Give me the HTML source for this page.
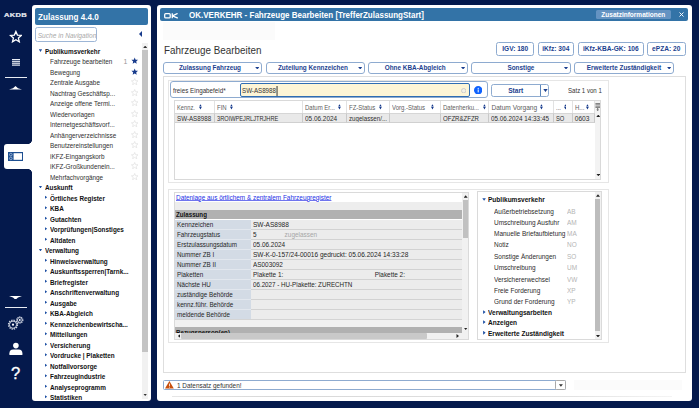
<!DOCTYPE html>
<html lang="de">
<head>
<meta charset="utf-8">
<title>OK.VERKEHR - Fahrzeuge Bearbeiten</title>
<style>
*{box-sizing:border-box;margin:0;padding:0}
html,body{width:699px;height:408px;overflow:hidden}
body{background:#04194c;font-family:"Liberation Sans",sans-serif;font-size:7px;color:#333;position:relative}
.abs{position:absolute}
svg{display:block}
/* ---------- left icon bar ---------- */
#side{position:absolute;left:0;top:0;width:32px;height:408px}
#side .sep{position:absolute;left:4.5px;width:22px;height:1px;background:#e8ecf4}
#tab{position:absolute;left:4px;top:144px;width:30px;height:25px;background:#fff;border-radius:3px 0 0 3px}
.cc{position:absolute;left:28px;width:4px;height:4px}
/* ---------- nav panel ---------- */
#nav{position:absolute;left:31.6px;top:5px;width:119.4px;height:395.5px;background:#fff;border-radius:3px;overflow:hidden}
#navhead{position:absolute;left:3.2px;top:3.4px;width:113.2px;height:16.3px;background:#3373a7;border-radius:2px;color:#fff;font-weight:bold;font-size:9px;line-height:18.2px;padding-left:3.7px;white-space:nowrap}
#navhead span{display:inline-block;transform:scaleX(.9);transform-origin:0 50%}
#navsearch{position:absolute;left:3.1px;top:21.6px;width:62.2px;height:15px;border:1px solid #9db6d6;border-radius:2.5px;font-style:italic;color:#a9a9a9;font-size:6.6px;line-height:15.8px;padding-left:2px;white-space:nowrap;overflow:hidden}
#tree{position:absolute;left:0.4px;top:41.7px;width:110px}
#tree div{height:10.5px;line-height:10.5px;white-space:nowrap;position:relative;font-size:7px;color:#303030}
#tree .g{font-weight:bold;color:#111;padding-left:12.6px}
#tree .s{font-weight:bold;color:#111;padding-left:18px}
#tree .l{padding-left:17.8px}
#tree .t{display:inline-block;transform:scaleX(.91);transform-origin:0 50%}
#tree i{position:absolute;top:3.2px}
#tree .g i{left:6.8px;width:3.4px;height:2.7px;background:#1d4fa3;clip-path:polygon(0 0,100% 0,50% 100%);top:2.6px}
#tree .s i{left:12.7px;width:2.5px;height:3.6px;background:#1d4fa3;clip-path:polygon(0 0,100% 50%,0 100%);top:1.8px}
#tree svg{position:absolute;left:98.8px;top:0}
#tree b.n{position:absolute;left:91.5px;top:0;font-weight:normal;color:#999}
/* scrollbars */
.sbtrack{position:absolute;background:#f1f1f1}
.sbthumb{position:absolute;background:#c4c4c4}
.arr{position:absolute}
/* ---------- main panel ---------- */
#main{position:absolute;left:157px;top:5px;width:534.5px;height:396px;background:#fff;border-radius:3px;overflow:hidden}
#mainhead{position:absolute;left:3.3px;top:3.2px;width:527.5px;height:13px;background:#3373a7;border-radius:2px;color:#fff;font-weight:bold;white-space:nowrap}
#mainhead .t{position:absolute;left:28.7px;top:.9px;font-size:8.5px;line-height:13px;transform:scaleX(.942);transform-origin:0 50%}
#zusatz{position:absolute;left:435.5px;top:2.2px;width:75px;height:8.8px;background:#6493c2;border-radius:1.5px;font-size:6.5px;line-height:9px;text-align:center}
h1{position:absolute;left:7px;top:38.5px;transform:scaleX(.947);transform-origin:0 50%;font-size:10.4px;font-weight:normal;color:#333;line-height:14px;white-space:nowrap}
.badge{position:absolute;top:37.3px;height:14.2px;margin-left:-.4px;border:1px solid #8eabd0;border-radius:2.5px;color:#1b3f8f;font-weight:bold;font-size:6.6px;line-height:12px;text-align:center;white-space:nowrap;background:#fff}
.dd{position:absolute;top:57.2px;height:11.4px;border:1px solid #8eabd0;border-radius:3px;color:#1b3f8f;font-weight:bold;font-size:6.4px;line-height:10.6px;text-align:center;white-space:nowrap;background:#fff;padding-right:0}
.dd:after{content:"";position:absolute;right:1.5px;top:3.7px;width:4.2px;height:2.6px;background:#1b3f8f;clip-path:polygon(0 0,100% 0,50% 100%)}
.box{position:absolute;border:1px solid #dcdcdc;background:#fff}

.tx{display:inline-block;transform:scaleX(.91);white-space:nowrap}
.tl{transform-origin:0 50%}
#sgroup{position:absolute;left:12.5px;top:75.9px;width:318.3px;height:17.6px;border:1px solid #8eabd0;border-radius:3px;background:#fff}
#sinput{position:absolute;left:82.8px;top:77.8px;width:230px;height:14.3px;border:1px solid #2f6db3;border-radius:2px;background:#fdf5d6}
#start{position:absolute;left:333.7px;top:78.5px;width:58.4px;height:13.3px;border:1px solid #8eabd0;border-radius:2.5px;background:#fff}
#start .l{position:absolute;left:0;top:0;width:49px;height:11.3px;border-right:1px solid #5c86bb;color:#1b3f8f;font-weight:bold;font-size:6.6px;line-height:11.6px;text-align:center}
table{border-collapse:separate;border-spacing:0;table-layout:fixed}
#grid{position:absolute;left:16.8px;top:95.2px;width:427.7px;height:80.2px;border:1px solid #d9d9d9;background:#fff;overflow:hidden}
#grid .h{position:absolute;top:0;height:12px;padding-top:.5px;border-right:1px solid #e2e2e2;color:#5e5e5e;font-size:6.6px;line-height:12px;padding-left:1.9px;white-space:nowrap;background:#fff}
#grid .c{position:absolute;top:11.6px;height:10.6px;border-right:1px solid #c9c9c9;border-top:1px solid #d6d6d6;border-bottom:1px solid #d0d0d0;color:#2e2e2e;font-size:6.6px;line-height:10.4px;padding-left:1.8px;white-space:nowrap;background:#e9e9e9;overflow:hidden}
.srt{position:absolute;top:3.3px;width:2.9px;height:5.6px}
#det{position:absolute;left:16.7px;top:187.4px;width:295.8px;height:147.3px;border:1px solid #dadada;background:#fff;overflow:hidden}
#det .r{position:absolute;left:-.8px;width:287.8px;height:10px;background:linear-gradient(90deg,#e2e7ee 76.1px,#d2d2d2 76.1px);font-size:6.9px;line-height:9.4px;color:#262626;white-space:nowrap}
#det .r .k{position:absolute;left:0;top:0;width:76.1px;height:9.2px;background:#d3dbe5;padding-left:2.1px}
#det .r .v{position:absolute;left:76.1px;top:0;width:211.7px;height:9.2px;background:#ececec;padding-left:2.2px}
#det .v .tx{transform:scaleX(.93)}
#det .hd{position:absolute;left:-.8px;width:287.8px;background:#b1b1b1;font-weight:bold;color:#111;font-size:6.8px;padding-left:1.6px;white-space:nowrap;overflow:hidden}
#acts{position:absolute;left:320.3px;top:186.4px;width:124.6px;height:149px;border:1px solid #dadada;background:#fff;overflow:hidden}
#acts div.a{position:absolute;left:15.4px;margin-top:.5px;height:10px;line-height:10px;font-size:7.1px;color:#2c2c2c;white-space:nowrap}
#acts div.a b{position:absolute;left:73px;top:0;font-weight:normal;color:#b4b4b4}
#acts div.gg{position:absolute;left:10.2px;margin-top:.4px;height:10px;line-height:10px;font-size:7.2px;font-weight:bold;color:#111;white-space:nowrap}
#acts i{position:absolute}
#status{position:absolute;left:6px;top:375.2px;width:403px;height:9.8px;border:1px solid #8eabd0;border-radius:1.5px;background:#fff;font-size:7.05px;line-height:9.6px;color:#333;white-space:nowrap}
</style>
</head>
<body>
<!-- =================== LEFT ICON BAR =================== -->
<div id="side">
  <div class="abs" style="left:4.4px;top:11.5px;font-size:5.5px;line-height:7px;font-weight:bold;color:#e9ecf3;-webkit-text-stroke:.2px #e9ecf3;letter-spacing:.2px;transform:scaleX(1.37);transform-origin:0 50%;white-space:nowrap">AKDB</div>
  <svg class="abs" style="left:8.6px;top:30.2px" width="13.8" height="13" viewBox="0 0 24 23"><path d="M12 2.6 L14.7 9 L21.6 9.6 L16.4 14.1 L18 20.9 L12 17.3 L6 20.9 L7.6 14.1 L2.4 9.6 L9.3 9 Z" fill="none" stroke="#fff" stroke-width="2.3" stroke-linejoin="miter"/></svg>
  <svg class="abs" style="left:11.6px;top:58.6px" width="8.6" height="7.6" viewBox="0 0 86 76"><g fill="#e9edf5"><rect x="0" y="0" width="86" height="13"/><rect x="0" y="21" width="86" height="13"/><rect x="0" y="42" width="86" height="13"/><rect x="0" y="63" width="86" height="13"/></g></svg>
  <div class="sep" style="top:77px"></div>
  <svg class="abs" style="left:9px;top:86px" width="13" height="3.6" viewBox="0 0 130 36"><path d="M0 36 L40 22 L65 0 L90 22 L130 36 Z" fill="#fff"/></svg>
  <div class="cc" style="top:140px;background:radial-gradient(circle at 0 0,#04194c 3.6px,#fff 4.2px)"></div>
  <div id="tab"></div>
  <div class="cc" style="top:169px;background:radial-gradient(circle at 0 100%,#04194c 3.6px,#fff 4.2px)"></div>
  <svg class="abs" style="left:8.2px;top:151.7px" width="15.2" height="9" viewBox="0 0 152 90"><rect x="6" y="6" width="140" height="78" fill="#fff" stroke="#1d4f91" stroke-width="12"/><rect x="0" y="0" width="56" height="90" fill="#1d4f91"/><circle cx="28" cy="26" r="13" fill="none" stroke="#b9c9e2" stroke-width="7"/><circle cx="28" cy="64" r="13" fill="none" stroke="#b9c9e2" stroke-width="7"/></svg>
  <svg class="abs" style="left:8.8px;top:295.6px" width="13" height="3.8" viewBox="0 0 130 38"><path d="M0 0 L130 0 L90 14 L65 38 L40 14 Z" fill="#fff"/></svg>
  <div class="sep" style="top:307px"></div>
  <svg class="abs" style="left:6px;top:314px" width="20" height="18" viewBox="0 0 20 18"><g fill="none" stroke="#cfd5e2"><circle cx="7" cy="10.7" r="4.5" stroke-width="1.3" stroke-dasharray="1.35 1"/><circle cx="7" cy="10.7" r="3.6" stroke-width="1"/><circle cx="13.8" cy="6" r="3.1" stroke-width="1.1" stroke-dasharray="1.2 .75"/><circle cx="13.8" cy="6" r="2.4" stroke-width=".9"/></g><circle cx="7" cy="10.7" r="1.1" fill="#fff"/><circle cx="13.8" cy="6" r=".9" fill="#fff"/></svg>
  <svg class="abs" style="left:9px;top:342px" width="14" height="14" viewBox="0 0 14 14"><circle cx="6.9" cy="3.6" r="2.8" fill="#fff"/><path d="M0.4 13 V11.2 Q0.4 7.4 4.2 7.4 H9.6 Q13.4 7.4 13.4 11.2 V13 Z" fill="#fff"/></svg>
  <div class="abs" style="left:10.2px;top:364.2px;width:11px;height:20px;color:#fff;font-size:16.6px;line-height:20px;text-align:center;-webkit-text-stroke:.35px #fff">?</div>
</div>

<!-- =================== NAV PANEL =================== -->
<div id="nav">
  <div id="navhead"><span>Zulassung 4.4.0</span></div>
  <div id="navsearch">Suche in Navigation</div>
  <div class="arr" style="left:107.4px;top:25.5px;width:3.5px;height:7.0px;background:#173b8c;clip-path:polygon(100% 0,100% 100%,0 50%)"></div>
  <div id="tree">
    <div class="g"><i></i><span class="t">Publikumsverkehr</span></div>
    <div class="l"><span class="t">Fahrzeuge bearbeiten</span><b class="n">1</b><svg width="7.4" height="7" viewBox="0 0 24 23"><path d="M12 1.5 L15 8.7 L22.8 9.4 L16.9 14.5 L18.7 22 L12 18 L5.3 22 L7.1 14.5 L1.2 9.4 L9 8.7 Z" fill="#173b8c"/></svg></div>
    <div class="l"><span class="t">Bewegung</span><svg width="7.4" height="7" viewBox="0 0 24 23"><path d="M12 1.5 L15 8.7 L22.8 9.4 L16.9 14.5 L18.7 22 L12 18 L5.3 22 L7.1 14.5 L1.2 9.4 L9 8.7 Z" fill="#173b8c"/></svg></div>
    <div class="l"><span class="t">Zentrale Ausgabe</span><svg width="7.4" height="7" viewBox="0 0 24 23"><path d="M12 1.5 L15 8.7 L22.8 9.4 L16.9 14.5 L18.7 22 L12 18 L5.3 22 L7.1 14.5 L1.2 9.4 L9 8.7 Z" fill="none" stroke="#d4d4d4" stroke-width="1.6"/></svg></div>
    <div class="l"><span class="t">Nachtrag Geschäftsp...</span><svg width="7.4" height="7" viewBox="0 0 24 23"><path d="M12 1.5 L15 8.7 L22.8 9.4 L16.9 14.5 L18.7 22 L12 18 L5.3 22 L7.1 14.5 L1.2 9.4 L9 8.7 Z" fill="none" stroke="#d4d4d4" stroke-width="1.6"/></svg></div>
    <div class="l"><span class="t">Anzeige offene Termi...</span><svg width="7.4" height="7" viewBox="0 0 24 23"><path d="M12 1.5 L15 8.7 L22.8 9.4 L16.9 14.5 L18.7 22 L12 18 L5.3 22 L7.1 14.5 L1.2 9.4 L9 8.7 Z" fill="none" stroke="#d4d4d4" stroke-width="1.6"/></svg></div>
    <div class="l"><span class="t">Wiedervorlagen</span><svg width="7.4" height="7" viewBox="0 0 24 23"><path d="M12 1.5 L15 8.7 L22.8 9.4 L16.9 14.5 L18.7 22 L12 18 L5.3 22 L7.1 14.5 L1.2 9.4 L9 8.7 Z" fill="none" stroke="#d4d4d4" stroke-width="1.6"/></svg></div>
    <div class="l"><span class="t">Internetgeschäftsvorf...</span><svg width="7.4" height="7" viewBox="0 0 24 23"><path d="M12 1.5 L15 8.7 L22.8 9.4 L16.9 14.5 L18.7 22 L12 18 L5.3 22 L7.1 14.5 L1.2 9.4 L9 8.7 Z" fill="none" stroke="#d4d4d4" stroke-width="1.6"/></svg></div>
    <div class="l"><span class="t">Anhängerverzeichnisse</span><svg width="7.4" height="7" viewBox="0 0 24 23"><path d="M12 1.5 L15 8.7 L22.8 9.4 L16.9 14.5 L18.7 22 L12 18 L5.3 22 L7.1 14.5 L1.2 9.4 L9 8.7 Z" fill="none" stroke="#d4d4d4" stroke-width="1.6"/></svg></div>
    <div class="l"><span class="t">Benutzereinstellungen</span><svg width="7.4" height="7" viewBox="0 0 24 23"><path d="M12 1.5 L15 8.7 L22.8 9.4 L16.9 14.5 L18.7 22 L12 18 L5.3 22 L7.1 14.5 L1.2 9.4 L9 8.7 Z" fill="none" stroke="#d4d4d4" stroke-width="1.6"/></svg></div>
    <div class="l"><span class="t">iKFZ-Eingangskorb</span><svg width="7.4" height="7" viewBox="0 0 24 23"><path d="M12 1.5 L15 8.7 L22.8 9.4 L16.9 14.5 L18.7 22 L12 18 L5.3 22 L7.1 14.5 L1.2 9.4 L9 8.7 Z" fill="none" stroke="#d4d4d4" stroke-width="1.6"/></svg></div>
    <div class="l"><span class="t">iKFZ-Großkundenein...</span><svg width="7.4" height="7" viewBox="0 0 24 23"><path d="M12 1.5 L15 8.7 L22.8 9.4 L16.9 14.5 L18.7 22 L12 18 L5.3 22 L7.1 14.5 L1.2 9.4 L9 8.7 Z" fill="none" stroke="#d4d4d4" stroke-width="1.6"/></svg></div>
    <div class="l"><span class="t">Mehrfachvorgänge</span><svg width="7.4" height="7" viewBox="0 0 24 23"><path d="M12 1.5 L15 8.7 L22.8 9.4 L16.9 14.5 L18.7 22 L12 18 L5.3 22 L7.1 14.5 L1.2 9.4 L9 8.7 Z" fill="none" stroke="#d4d4d4" stroke-width="1.6"/></svg></div>
    <div class="g"><i></i><span class="t">Auskunft</span></div>
    <div class="s"><i></i><span class="t">Örtliches Register</span></div>
    <div class="s"><i></i><span class="t">KBA</span></div>
    <div class="s"><i></i><span class="t">Gutachten</span></div>
    <div class="s"><i></i><span class="t">Vorprüfungen|Sonstiges</span></div>
    <div class="s"><i></i><span class="t">Altdaten</span></div>
    <div class="g"><i></i><span class="t">Verwaltung</span></div>
    <div class="s"><i></i><span class="t">Hinweisverwaltung</span></div>
    <div class="s"><i></i><span class="t">Auskunftssperren|Tarnk...</span></div>
    <div class="s"><i></i><span class="t">Briefregister</span></div>
    <div class="s"><i></i><span class="t">Anschriftenverwaltung</span></div>
    <div class="s"><i></i><span class="t">Ausgabe</span></div>
    <div class="s"><i></i><span class="t">KBA-Abgleich</span></div>
    <div class="s"><i></i><span class="t">Kennzeichenbewirtscha...</span></div>
    <div class="s"><i></i><span class="t">Mitteilungen</span></div>
    <div class="s"><i></i><span class="t">Versicherung</span></div>
    <div class="s"><i></i><span class="t">Vordrucke | Plaketten</span></div>
    <div class="s"><i></i><span class="t">Notfallvorsorge</span></div>
    <div class="s"><i></i><span class="t">Fahrzeugindustrie</span></div>
    <div class="s"><i></i><span class="t">Analyseprogramm</span></div>
    <div class="s"><i></i><span class="t">Statistiken</span></div>
  </div>
  <div class="sbtrack" style="left:110.4px;top:38px;width:6.2px;height:356px"></div>
  <div class="sbthumb" style="left:110.4px;top:45px;width:6px;height:302px"></div>
  <div class="arr" style="left:111.6px;top:40.5px;width:4.0px;height:2.5px;background:#333;clip-path:polygon(50% 0,100% 100%,0 100%)"></div>
  <div class="arr" style="left:111.6px;top:388.5px;width:4.0px;height:2.5px;background:#333;clip-path:polygon(0 0,100% 0,50% 100%)"></div>
</div>

<!-- =================== MAIN PANEL =================== -->
<div id="main">
  <div id="mainhead">
    <svg class="abs" style="left:4px;top:5px" width="14.4" height="5.6" viewBox="0 0 146 56"><g fill="none" stroke="#fff" stroke-width="13"><rect x="7" y="7" width="56" height="42" rx="10"/><path d="M84 2 V54 M86 28 L138 4 M86 28 L140 52"/></g></svg>
    <div class="t">OK.VERKEHR - Fahrzeuge Bearbeiten [TrefferZulassungStart]</div>
    <div id="zusatz"><span>Zusatzinformationen</span></div>
    <svg class="abs" style="left:518.8px;top:3.9px" width="5" height="5" viewBox="0 0 10 10"><path d="M1 1 L9 9 M9 1 L1 9" stroke="#fff" stroke-width="1.9"/></svg>
  </div>
  <div class="abs" style="left:6px;top:17px;width:112px;height:18px;background:#fbfbfb"></div>
  <h1>Fahrzeuge Bearbeiten</h1>

  <div class="badge" style="left:339.7px;width:37.8px"><span>IGV: 180</span></div>
  <div class="badge" style="left:381px;width:36.4px"><span>iKfz: 304</span></div>
  <div class="badge" style="left:421.5px;width:65.4px"><span>iKfz-KBA-GK: 106</span></div>
  <div class="badge" style="left:490.2px;width:38.8px"><span>ePZA: 20</span></div>
  <div class="dd" style="padding-right:4.6px;left:5.6px;width:99.3px"><span>Zulassung Fahrzeug</span></div>
  <div class="dd" style="padding-right:4.4px;left:108.5px;width:99.3px"><span>Zuteilung Kennzeichen</span></div>
  <div class="dd" style="padding-right:5.6px;left:211.4px;width:99.3px"><span>Ohne KBA-Abgleich</span></div>
  <div class="dd" style="left:314.3px;width:99.3px"><span>Sonstige</span></div>
  <div class="dd" style="left:417.2px;width:99.6px"><span>Erweiterte Zuständigkeit</span></div>
  <div class="box" style="left:6px;top:70.5px;width:522.5px;height:297px;border-color:#dedede"></div>
  <div class="box" style="left:10.7px;top:75.3px;width:441.2px;height:103.2px;border-color:#e6e6e6"></div>
  <div id="sgroup"></div>
  <div class="abs" style="left:16px;top:80.8px;font-size:6.9px;line-height:10px;color:#333"><span class="tx tl">freies Eingabefeld*</span></div>
  <div id="sinput"><div class="abs" style="left:1.6px;top:1.9px;font-size:6.8px;line-height:10px;color:#333"><span class="tx tl" style="border-right:0.7px solid #222;padding-right:0.3px">SW-AS8988</span></div>
    <svg class="abs" style="left:220px;top:4.1px" width="5.4" height="5.4" viewBox="0 0 54 54"><circle cx="27" cy="27" r="22" fill="#f4f1e6" stroke="#c9c9c9" stroke-width="9"/></svg>
  </div>
  <svg class="abs" style="left:316.6px;top:80.6px" width="8.4" height="8.4" viewBox="0 0 84 84"><circle cx="42" cy="42" r="42" fill="#0f62fe"/><rect x="37" y="34" width="10" height="30" fill="#fff"/><circle cx="42" cy="23" r="6.5" fill="#fff"/></svg>
  <div id="start"><div class="l"><span>Start</span></div><div class="arr" style="left:51.6px;top:4.5px;width:4.4px;height:3.0px;background:#1b3f8f;clip-path:polygon(0 0,100% 0,50% 100%)"></div></div>
  <div class="abs" style="left:410.6px;top:81px;font-size:6.7px;line-height:10px;color:#333"><span class="tx tl">Satz 1 von 1</span></div>
  <div id="grid">
    <div class="h" style="left:0.5px;width:40.2px"><span class="tx tl" style="transform:scaleX(.87)">Kennz.</span><svg class="srt" style="left:23.7px" viewBox="0 0 32 64"><path d="M16 2 L31 29 H1 Z M16 62 L1 35 H31 Z" fill="#173b8c"/></svg></div>
    <div class="c" style="left:0.5px;width:40.2px"><span class="tx tl" style="transform:scaleX(.943)">SW-AS8988</span></div>
    <div class="h" style="left:40.7px;width:87.3px"><span class="tx tl">FIN</span><svg class="srt" style="left:15.0px" viewBox="0 0 32 64"><path d="M16 2 L31 29 H1 Z M16 62 L1 35 H31 Z" fill="#173b8c"/></svg></div>
    <div class="c" style="left:40.7px;width:87.3px"><span class="tx tl" style="transform:scaleX(.858)">3ROIWPEJRLJTRJHRE</span></div>
    <div class="h" style="left:128.0px;width:44.3px"><span class="tx tl">Datum Er...</span><svg class="srt" style="left:35.5px" viewBox="0 0 32 64"><path d="M16 2 L31 29 H1 Z M16 62 L1 35 H31 Z" fill="#173b8c"/></svg></div>
    <div class="c" style="left:128.0px;width:44.3px"><span class="tx tl" style="transform:scaleX(.974)">05.06.2024</span></div>
    <div class="h" style="left:172.3px;width:43.1px"><span class="tx tl">FZ-Status</span><svg class="srt" style="left:32.1px" viewBox="0 0 32 64"><path d="M16 2 L31 29 H1 Z M16 62 L1 35 H31 Z" fill="#173b8c"/></svg></div>
    <div class="c" style="left:172.3px;width:43.1px"><span class="tx tl" style="transform:scaleX(.935)">zugelassen/...</span></div>
    <div class="h" style="left:215.4px;width:50.6px"><span class="tx tl">Vorg.-Status</span><svg class="srt" style="left:41.0px" viewBox="0 0 32 64"><path d="M16 2 L31 29 H1 Z M16 62 L1 35 H31 Z" fill="#173b8c"/></svg></div>
    <div class="c" style="left:215.4px;width:50.6px"><span class="tx tl"></span></div>
    <div class="h" style="left:266.0px;width:48.7px"><span class="tx tl">Datenherku...</span><svg class="srt" style="left:42.2px" viewBox="0 0 32 64"><path d="M16 2 L31 29 H1 Z M16 62 L1 35 H31 Z" fill="#173b8c"/></svg></div>
    <div class="c" style="left:266.0px;width:48.7px"><span class="tx tl" style="transform:scaleX(.918)">OFZR&amp;ZFZR</span></div>
    <div class="h" style="left:314.7px;width:64.8px"><span class="tx tl" style="transform:scaleX(1)">Datum Vorgang</span><svg class="srt" style="left:51.0px" viewBox="0 0 32 64"><path d="M16 2 L31 29 H1 Z M16 62 L1 35 H31 Z" fill="#173b8c"/></svg></div>
    <div class="c" style="left:314.7px;width:64.8px"><span class="tx tl" style="transform:scaleX(.957)">05.06.2024 14:33:45</span></div>
    <div class="h" style="left:379.5px;width:18.7px"><span class="tx tl">...</span><svg class="srt" style="left:9.3px" viewBox="0 0 32 64"><path d="M16 2 L31 29 H1 Z M16 62 L1 35 H31 Z" fill="#173b8c"/></svg></div>
    <div class="c" style="left:379.5px;width:18.7px"><span class="tx tl" style="transform:scaleX(.879)">SO</span></div>
    <div class="h" style="left:398.2px;width:22.5px"><span class="tx tl">H...</span><svg class="srt" style="left:13.4px" viewBox="0 0 32 64"><path d="M16 2 L31 29 H1 Z M16 62 L1 35 H31 Z" fill="#173b8c"/></svg></div>
    <div class="c" style="left:398.2px;width:22.5px"><span class="tx tl" style="transform:scaleX(1)">0603</span></div>
    <div class="sbtrack" style="left:420.2px;top:0;width:6.5px;height:79px;background:#f3f3f3"></div>
    <svg class="abs" style="left:420.7px;top:1.6px" width="5.6" height="8.4" viewBox="0 0 56 84"><g fill="#6a6a6a"><rect x="4" y="0" width="48" height="8"/><rect x="4" y="14" width="48" height="8"/><rect x="4" y="28" width="48" height="8"/><rect x="4" y="42" width="48" height="8"/><rect x="22" y="50" width="10" height="18"/><path d="M14 66 H40 L27 82 Z"/></g></svg>
    <div class="arr" style="left:421.5px;top:13.4px;width:4.0px;height:2.5px;background:#222;clip-path:polygon(50% 0,100% 100%,0 100%)"></div>
    <div class="arr" style="left:421.5px;top:72.6px;width:4.0px;height:2.5px;background:#222;clip-path:polygon(0 0,100% 0,50% 100%)"></div>
  </div>
  <div class="box" style="left:10.7px;top:183.7px;width:441.2px;height:154px;border-color:#e6e6e6"></div>
  <div id="det">
    <div class="abs" style="left:.8px;top:0;width:294px;height:146px">
    <div class="abs" style="left:0.4px;top:-0.7px;font-size:7.05px;line-height:10px;color:#2330e6;white-space:nowrap"><span class="tx tl" style="text-decoration:underline;text-decoration-thickness:.7px;text-underline-offset:-.3px;text-decoration-color:#6f74ee">Datenlage aus örtlichem &amp; zentralem Fahrzeugregister</span></div>
    <div class="abs" style="left:-.8px;top:8.6px;width:287.8px;height:8px;background:#ededed"></div>
    <div class="hd" style="top:16.6px;height:9.4px;line-height:9.6px"><span class="tx tl">Zulassung</span></div>
    <div class="r" style="top:26.4px"><div class="k"><span class="tx tl">Kennzeichen</span></div><div class="v"><span class="tx tl" style="transform:scaleX(.95)">SW-AS8988</span></div></div>
    <div class="r" style="top:36.4px"><div class="k"><span class="tx tl">Fahrzeugstatus</span></div><div class="v"><span class="tx tl">5<span style="position:absolute;left:34px;color:#a6a6a6">zugelassen</span></span></div></div>
    <div class="r" style="top:46.4px"><div class="k"><span class="tx tl">Erstzulassungsdatum</span></div><div class="v"><span class="tx tl">05.06.2024</span></div></div>
    <div class="r" style="top:56.4px"><div class="k"><span class="tx tl">Nummer ZB I</span></div><div class="v"><span class="tx tl" style="transform:scaleX(.946)">SW-K-0-157/24-00016 gedruckt: 05.06.2024 14:33:28</span></div></div>
    <div class="r" style="top:66.4px"><div class="k"><span class="tx tl">Nummer ZB II</span></div><div class="v"><span class="tx tl">AS003092</span></div></div>
    <div class="r" style="top:76.4px"><div class="k"><span class="tx tl">Plaketten</span></div><div class="v"><span class="tx tl">Plakette 1:<span style="position:absolute;left:130.8px">Plakette 2:</span></span></div></div>
    <div class="r" style="top:86.4px"><div class="k"><span class="tx tl">Nächste HU</span></div><div class="v"><span class="tx tl" style="transform:scaleX(.904)">06.2027 - HU-Plakette: ZURECHTN</span></div></div>
    <div class="r" style="top:96.4px"><div class="k"><span class="tx tl">zuständige Behörde</span></div><div class="v"><span class="tx tl"></span></div></div>
    <div class="r" style="top:106.4px"><div class="k"><span class="tx tl">kennz.führ. Behörde</span></div><div class="v"><span class="tx tl"></span></div></div>
    <div class="r" style="top:116.4px"><div class="k"><span class="tx tl">meldende Behörde</span></div><div class="v"><span class="tx tl"></span></div></div>
    <div class="abs" style="left:-.8px;top:125.4px;width:287.8px;height:8.4px;background:#f1f1f1;border-top:1px solid #d4d4d4"></div>
    <div class="hd" style="top:133.8px;height:5.4px;line-height:11px"><span class="tx tl">Bezugsperson(en)</span></div>
    <div class="sbtrack" style="left:-.8px;top:139.2px;width:294.8px;height:7px;background:#f1f1f1"></div>
    <div class="sbthumb" style="left:6px;top:139.9px;width:246px;height:5.4px;background:#c9c9c9;border-radius:1px"></div>
    <div class="arr" style="left:2.4px;top:140.6px;width:2.5px;height:4.0px;background:#222;clip-path:polygon(100% 0,100% 100%,0 50%)"></div>
    <div class="arr" style="left:281px;top:140.6px;width:2.5px;height:4.0px;background:#222;clip-path:polygon(0 0,100% 50%,0 100%)"></div>
    <div class="sbtrack" style="left:287px;top:0;width:6.2px;height:139.2px;background:#f1f1f1"></div>
    <div class="sbthumb" style="left:287.7px;top:6.4px;width:5px;height:38px;background:#c1c1c1"></div>
    <div class="arr" style="left:288.2px;top:1.8px;width:4.0px;height:2.5px;background:#222;clip-path:polygon(50% 0,100% 100%,0 100%)"></div>
    <div class="arr" style="left:288.2px;top:134.2px;width:4.0px;height:2.5px;background:#222;clip-path:polygon(0 0,100% 0,50% 100%)"></div>
  </div>
  </div>
  <div id="acts">
    <div class="gg" style="top:2.6px"><i style="left:-6.2px;top:2.8px;width:3.6px;height:2.7px;background:#1d4fa3;clip-path:polygon(0 0,100% 0,50% 100%)"></i><span class="tx tl">Publikumsverkehr</span></div>
    <div class="a" style="top:13.7px"><span class="tx tl">Außerbetriebsetzung</span><b><span class="tx tl">AB</span></b></div>
    <div class="a" style="top:25.0px"><span class="tx tl">Umschreibung Ausfuhr</span><b><span class="tx tl">AM</span></b></div>
    <div class="a" style="top:36.3px"><span class="tx tl">Manuelle Briefaufbietung</span><b><span class="tx tl">MA</span></b></div>
    <div class="a" style="top:47.6px"><span class="tx tl">Notiz</span><b><span class="tx tl">NO</span></b></div>
    <div class="a" style="top:59.0px"><span class="tx tl">Sonstige Änderungen</span><b><span class="tx tl">SO</span></b></div>
    <div class="a" style="top:70.4px"><span class="tx tl">Umschreibung</span><b><span class="tx tl">UM</span></b></div>
    <div class="a" style="top:81.7px"><span class="tx tl">Versichererwechsel</span><b><span class="tx tl">VW</span></b></div>
    <div class="a" style="top:93.1px"><span class="tx tl">Freie Forderung</span><b><span class="tx tl">XP</span></b></div>
    <div class="a" style="top:104.5px"><span class="tx tl">Grund der Forderung</span><b><span class="tx tl">YP</span></b></div>
    <div class="gg" style="top:115.7px"><i style="left:-5.4px;top:1.7px;width:2.5px;height:3.9px;background:#1d4fa3;clip-path:polygon(0 0,100% 50%,0 100%)"></i><span class="tx tl">Verwaltungsarbeiten</span></div>
    <div class="gg" style="top:125.7px"><i style="left:-5.4px;top:1.7px;width:2.5px;height:3.9px;background:#1d4fa3;clip-path:polygon(0 0,100% 50%,0 100%)"></i><span class="tx tl">Anzeigen</span></div>
    <div class="gg" style="top:136.4px"><i style="left:-5.4px;top:1.7px;width:2.5px;height:3.9px;background:#1d4fa3;clip-path:polygon(0 0,100% 50%,0 100%)"></i><span class="tx tl">Erweiterte Zuständigkeit</span></div>
    <div class="sbtrack" style="left:116.6px;top:0;width:6.2px;height:147px;background:#f1f1f1"></div>
    <div class="sbthumb" style="left:117.2px;top:6.4px;width:5px;height:132px;background:#bdbdbd"></div>
    <div class="arr" style="left:117.7px;top:1.8px;width:4.0px;height:2.5px;background:#222;clip-path:polygon(50% 0,100% 100%,0 100%)"></div>
    <div class="arr" style="left:117.7px;top:142.6px;width:4.0px;height:2.5px;background:#222;clip-path:polygon(0 0,100% 0,50% 100%)"></div>
  </div>
  <div id="status">
    <svg class="abs" style="left:1.4px;top:0.3px" width="8.8" height="7.6" viewBox="0 0 88 76"><path d="M44 0 L88 76 H0 Z" fill="#c8500e"/><rect x="40" y="26" width="8" height="26" fill="#fff"/><rect x="40" y="58" width="8" height="8" fill="#fff"/></svg>
    <div class="abs" style="left:13.2px;top:0"><span class="tx tl">1 Datensatz gefunden!</span></div>
    <div class="abs" style="left:391.3px;top:-1px;width:10.8px;height:9.8px;border:1px solid #a9a9a9;border-radius:1.5px;background:#fff"><div class="arr" style="left:2.6px;top:3px;width:4.0px;height:2.6px;background:#333;clip-path:polygon(0 0,100% 0,50% 100%)"></div></div>
  </div>
  <div class="abs" style="left:416.6px;top:375px;width:108px;height:10px;background:#fbfbfb"></div>
  <div class="abs" style="left:15px;top:390.5px;width:500px;height:1px;background:linear-gradient(90deg,#e6e6e6,#d8d8d8 20%,#e2e2e2 80%,#f4f4f4)"></div>
</div>
</body>
</html>
